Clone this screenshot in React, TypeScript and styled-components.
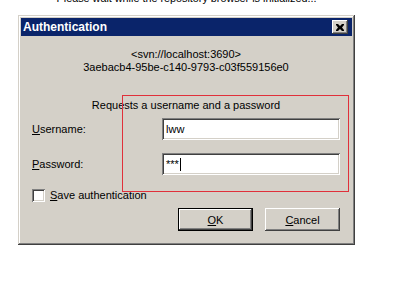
import * as React from "react";
import styled, { createGlobalStyle } from "styled-components";

const GlobalStyle = createGlobalStyle`
  html, body {
    margin: 0;
    padding: 0;
    background: #ffffff;
  }
  body {
    font-family: "Liberation Sans", Arial, sans-serif;
    font-size: 11px;
    color: #000000;
  }
`;

const Page = styled.div`
  position: relative;
  width: 418px;
  height: 285px;
  padding-left: 18px;
  box-sizing: border-box;
  overflow: hidden;
`;

const Notice = styled.div`
  width: 337px;
  height: 6px;
  overflow: hidden;
  text-align: center;
  font-size: 10.8px;
`;

const NoticeText = styled.span`
  display: block;
  line-height: 12px;
  margin-top: -8px;
`;

const Window = styled.div`
  width: 337px;
  margin-top: 9px;
  padding: 3px;
  box-sizing: border-box;
  background: #d4d0c8;
  box-shadow: inset -1px -1px #404040, inset 1px 1px #d4d0c8,
    inset -2px -2px #808080, inset 2px 2px #ffffff;
  display: flex;
  flex-direction: column;
`;

const TitleBar = styled.div`
  height: 18px;
  background: #0a246a;
  color: #ffffff;
  font-weight: bold;
  font-size: 12px;
  display: flex;
  align-items: center;
  justify-content: space-between;
  padding: 0 4px 0 2px;
`;

const CloseButton = styled.div`
  width: 16px;
  height: 14px;
  box-sizing: border-box;
  background: #d4d0c8;
  box-shadow: inset -1px -1px #404040, inset 1px 1px #ffffff,
    inset -2px -2px #808080, inset 2px 2px #d4d0c8;
  display: flex;
  align-items: center;
  justify-content: center;
`;

const Body = styled.div`
  display: flex;
  flex-direction: column;
  padding: 12px 12px 11px 11px;
`;

const CenterLine = styled.div<{ $gap?: number }>`
  text-align: center;
  line-height: 13px;
  margin-top: ${(p) => p.$gap ?? 0}px;
`;

const FormGrid = styled.div`
  display: grid;
  grid-template-columns: 130px 178px;
  row-gap: 13px;
  margin-top: 6px;
  align-items: center;
`;

const Label = styled.label`
  line-height: 13px;
`;

const Key = styled.span`
  text-decoration: underline;
  text-underline-offset: 1px;
`;

const Field = styled.div`
  height: 22px;
  box-sizing: border-box;
  background: #ffffff;
  box-shadow: inset 1px 1px #808080, inset -1px -1px #ffffff,
    inset 2px 2px #404040, inset -2px -2px #d4d0c8;
  padding: 0 4px;
  display: flex;
  align-items: center;
  font-size: 11px;
`;

const Caret = styled.span`
  display: inline-block;
  width: 1px;
  height: 13px;
  background: #000000;
  margin-left: 1px;
`;

const CheckRow = styled.div`
  display: flex;
  align-items: center;
  gap: 5px;
  margin-top: 14px;
  height: 13px;
`;

const CheckBox = styled.span`
  width: 13px;
  height: 13px;
  box-sizing: border-box;
  background: #ffffff;
  box-shadow: inset 1px 1px #808080, inset -1px -1px #ffffff,
    inset 2px 2px #404040, inset -2px -2px #d4d0c8;
`;

const ButtonRow = styled.div`
  display: flex;
  justify-content: flex-end;
  gap: 12px;
  margin-top: 6px;
`;

const Button = styled.div<{ $default?: boolean }>`
  width: 75px;
  height: 23px;
  box-sizing: border-box;
  display: flex;
  align-items: center;
  justify-content: center;
  background: #d4d0c8;
  box-shadow: ${(p) =>
    p.$default
      ? "inset 0 0 0 1px #000000, inset -2px -2px #404040, inset 2px 2px #ffffff, inset -3px -3px #808080"
      : "inset -1px -1px #404040, inset 1px 1px #ffffff, inset -2px -2px #808080, inset 2px 2px #d4d0c8"};
`;

const Highlight = styled.div`
  position: absolute;
  left: 122px;
  top: 95px;
  width: 227px;
  height: 97px;
  box-sizing: border-box;
  border: 1px solid #e0303a;
  pointer-events: none;
`;

export default function App() {
  return (
    <>
      <GlobalStyle />
      <Page>
        <Notice>
          <NoticeText>
            Please wait while the repository browser is initialized...
          </NoticeText>
        </Notice>
        <Window>
          <TitleBar>
            <span>Authentication</span>
            <CloseButton>
              <svg width="8" height="7" viewBox="0 0 8 7">
                <path
                  d="M0 0h2l2 2 2-2h2v1L6 3.5 8 6v1H6L4 5 2 7H0V6l2-2.5L0 1z"
                  fill="#000000"
                />
              </svg>
            </CloseButton>
          </TitleBar>
          <Body>
            <CenterLine>&lt;svn://localhost:3690&gt;</CenterLine>
            <CenterLine>3aebacb4-95be-c140-9793-c03f559156e0</CenterLine>
            <CenterLine $gap={25}>Requests a username and a password</CenterLine>
            <FormGrid>
              <Label>
                <Key>U</Key>sername:
              </Label>
              <Field>lww</Field>
              <Label>
                <Key>P</Key>assword:
              </Label>
              <Field>
                ***
                <Caret />
              </Field>
            </FormGrid>
            <CheckRow>
              <CheckBox />
              <Label>
                <Key>S</Key>ave authentication
              </Label>
            </CheckRow>
            <ButtonRow>
              <Button $default>
                <span>
                  <Key>O</Key>K
                </span>
              </Button>
              <Button>
                <span>
                  <Key>C</Key>ancel
                </span>
              </Button>
            </ButtonRow>
          </Body>
        </Window>
        <Highlight />
      </Page>
    </>
  );
}
